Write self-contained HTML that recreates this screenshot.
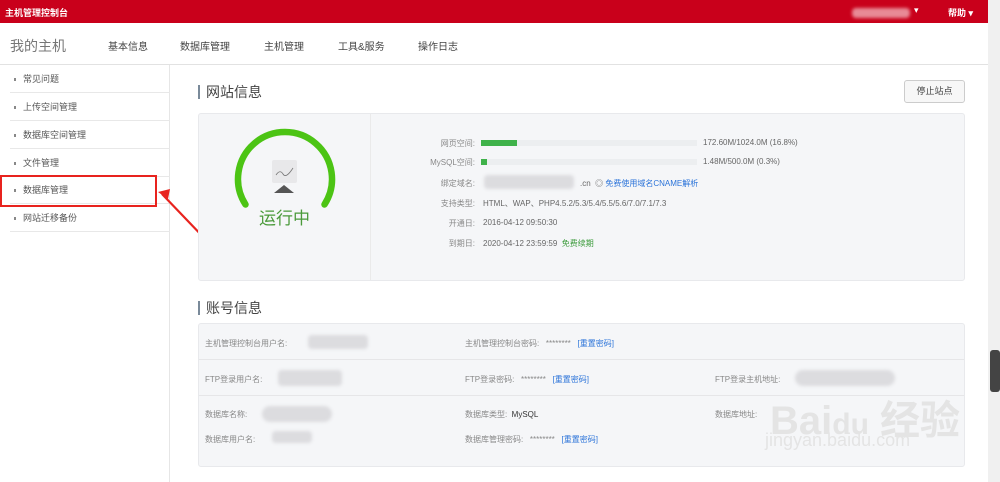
<!DOCTYPE html>
<html><head><meta charset="utf-8"><style>
*{margin:0;padding:0;box-sizing:border-box}
body{width:1000px;height:482px;overflow:hidden;background:#fff;font-family:"Liberation Sans","Noto Sans CJK SC",sans-serif;color:#666;position:relative;font-size:9px}
.a{position:absolute;white-space:nowrap}
.top{position:absolute;left:0;top:0;width:988px;height:23px;background:#c9001b}
.nav{position:absolute;left:0;top:23px;width:988px;height:42px;border-bottom:1px solid #e2e2e2;background:#fff}
.sb{position:absolute;left:0;top:65px;width:170px;height:417px;border-right:1px solid #e6e6e6}
.si{position:absolute;left:10px;width:160px;height:28px;border-bottom:1px solid #e8e8e8;font-size:9px;color:#555;line-height:28px;padding-left:4px}
.si:before{content:"";display:inline-block;width:2px;height:3px;background:#888;margin-right:7px;vertical-align:middle}
.panel{position:absolute;background:#f5f6f8;border:1px solid #e8e9ec;border-radius:3px}
.lbl{position:absolute;font-size:8px;color:#888;text-align:right;white-space:nowrap}
.blur{position:absolute;background:#dcdcdf;border-radius:4px;filter:blur(1.5px)}
.lnk{color:#2a73d9}
h2{position:absolute;font-weight:normal;font-size:14px;color:#444;border-left:2px solid #7a8a9a;padding-left:6px;line-height:14px}
.sc{position:absolute;left:988px;top:0;width:12px;height:482px;background:#f0f0f0}
</style></head><body>
<div class="top"></div>
<div class="a" style="left:5px;top:6px;color:#fff;font-size:9px;font-weight:bold">主机管理控制台</div>
<div class="blur" style="left:852px;top:8px;width:58px;height:10px;background:#e88a96"></div>
<div class="a" style="left:914px;top:5px;color:#fff;font-size:9px">▾</div>
<div class="a" style="left:948px;top:6px;color:#fff;font-size:9px;font-weight:bold">帮助 ▾</div>
<div class="nav"></div>
<div class="a" style="left:10px;top:36px;font-size:14px;color:#777">我的主机</div>
<div class="a" style="left:108px;top:38px;font-size:10px;color:#444">基本信息</div>
<div class="a" style="left:180px;top:38px;font-size:10px;color:#444">数据库管理</div>
<div class="a" style="left:264px;top:38px;font-size:10px;color:#444">主机管理</div>
<div class="a" style="left:338px;top:38px;font-size:10px;color:#444">工具&amp;服务</div>
<div class="a" style="left:418px;top:38px;font-size:10px;color:#444">操作日志</div>
<div class="sb"></div>
<div class="si" style="top:65px">常见问题</div>
<div class="si" style="top:93px">上传空间管理</div>
<div class="si" style="top:121px">数据库空间管理</div>
<div class="si" style="top:149px">文件管理</div>
<div class="si" style="top:176px">数据库管理</div>
<div class="si" style="top:204px">网站迁移备份</div>
<div class="a" style="left:0;top:175px;width:157px;height:32px;border:2px solid #e8231e"></div>
<svg class="a" style="left:150px;top:180px" width="70" height="70"><polygon points="8,12 20,9 18,19" fill="#e8231e"/><line x1="12" y1="14" x2="58" y2="62" stroke="#e8231e" stroke-width="2.2"/></svg>
<h2 style="left:198px;top:85px">网站信息</h2>
<div class="a" style="left:904px;top:80px;width:61px;height:23px;border:1px solid #ccc;border-radius:3px;background:#f7f7f7;font-size:9px;color:#444;text-align:center;line-height:21px">停止站点</div>
<div class="panel" style="left:198px;top:113px;width:767px;height:168px"></div>
<div class="a" style="left:370px;top:114px;width:1px;height:166px;background:#eaeaea"></div>
<svg class="a" style="left:230px;top:128px" width="110" height="90"><path d="M15.5 76.5 A47 47 0 1 1 94.5 76.5" fill="none" stroke="#4cc414" stroke-width="6.5" stroke-linecap="round"/><rect x="42" y="32" width="25" height="23" fill="#e8e8ea" rx="2"/><path d="M46 47 q4 -6 7 -1 t10 -6" stroke="#777" fill="none" stroke-width=".8"/><polygon points="44,65 54,57 64,65" fill="#555"/></svg>
<div class="a" style="left:259px;top:204px;font-size:17px;color:#4a9a3a">运行中</div>
<div class="lbl" style="left:400px;width:75px;top:138px">网页空间:</div>
<div class="lbl" style="left:400px;width:75px;top:157px">MySQL空间:</div>
<div class="lbl" style="left:400px;width:75px;top:178px">绑定域名:</div>
<div class="lbl" style="left:400px;width:75px;top:198px">支持类型:</div>
<div class="lbl" style="left:400px;width:75px;top:218px">开通日:</div>
<div class="lbl" style="left:400px;width:75px;top:238px">到期日:</div>
<div class="a" style="left:481px;top:140px;width:216px;height:6px;background:#eceef0"></div>
<div class="a" style="left:481px;top:140px;width:36px;height:6px;background:#3fb24a"></div>
<div class="a" style="left:481px;top:159px;width:216px;height:6px;background:#eceef0"></div>
<div class="a" style="left:481px;top:159px;width:6px;height:6px;background:#3fb24a"></div>
<div class="a" style="left:703px;top:138px;font-size:8px">172.60M/1024.0M (16.8%)</div>
<div class="a" style="left:703px;top:157px;font-size:8px">1.48M/500.0M (0.3%)</div>
<div class="blur" style="left:484px;top:175px;width:90px;height:14px"></div>
<div class="a" style="left:580px;top:178px;font-size:8px">.cn &nbsp;◎ <span class="lnk">免费使用域名CNAME解析</span></div>
<div class="a" style="left:483px;top:198px;font-size:8px">HTML、WAP、PHP4.5.2/5.3/5.4/5.5/5.6/7.0/7.1/7.3</div>
<div class="a" style="left:483px;top:218px;font-size:8px">2016-04-12 09:50:30</div>
<div class="a" style="left:483px;top:238px;font-size:8px">2020-04-12 23:59:59 &nbsp;<span style="color:#3a9a3a">免费续期</span></div>
<h2 style="left:198px;top:301px">账号信息</h2>
<div class="panel" style="left:198px;top:323px;width:767px;height:144px"></div>
<div class="a" style="left:199px;top:359px;width:765px;height:1px;background:#e6e6e8"></div>
<div class="a" style="left:199px;top:395px;width:765px;height:1px;background:#e6e6e8"></div>
<div class="lbl" style="left:205px;top:338px">主机管理控制台用户名:</div>
<div class="blur" style="left:308px;top:335px;width:60px;height:14px"></div>
<div class="lbl" style="left:465px;top:338px">主机管理控制台密码: &nbsp; ******** &nbsp; <span class="lnk">[重置密码]</span></div>
<div class="lbl" style="left:205px;top:374px">FTP登录用户名:</div>
<div class="blur" style="left:278px;top:370px;width:64px;height:16px"></div>
<div class="lbl" style="left:465px;top:374px">FTP登录密码: &nbsp; ******** &nbsp; <span class="lnk">[重置密码]</span></div>
<div class="lbl" style="left:715px;top:374px">FTP登录主机地址:</div>
<div class="blur" style="left:795px;top:370px;width:100px;height:16px;border-radius:8px"></div>
<div class="lbl" style="left:205px;top:409px">数据库名称:</div>
<div class="blur" style="left:262px;top:406px;width:70px;height:16px;border-radius:8px"></div>
<div class="lbl" style="left:465px;top:409px">数据库类型: &nbsp;<span style="color:#333">MySQL</span></div>
<div class="lbl" style="left:715px;top:409px">数据库地址:</div>
<div class="lbl" style="left:205px;top:434px">数据库用户名:</div>
<div class="blur" style="left:272px;top:431px;width:40px;height:12px"></div>
<div class="lbl" style="left:465px;top:434px">数据库管理密码: &nbsp; ******** &nbsp; <span class="lnk">[重置密码]</span></div>
<div class="a" style="left:770px;top:388px;font-size:40px;color:#e4e4e4;font-weight:bold">Bai<span style="font-size:30px">du</span> 经验</div>
<div class="a" style="left:765px;top:430px;font-size:18px;color:#e4e4e4">jingyan.baidu.com</div>
<div class="sc"></div>
<div class="a" style="left:990px;top:350px;width:10px;height:42px;background:#444;border-radius:3px"></div>
</body></html>
